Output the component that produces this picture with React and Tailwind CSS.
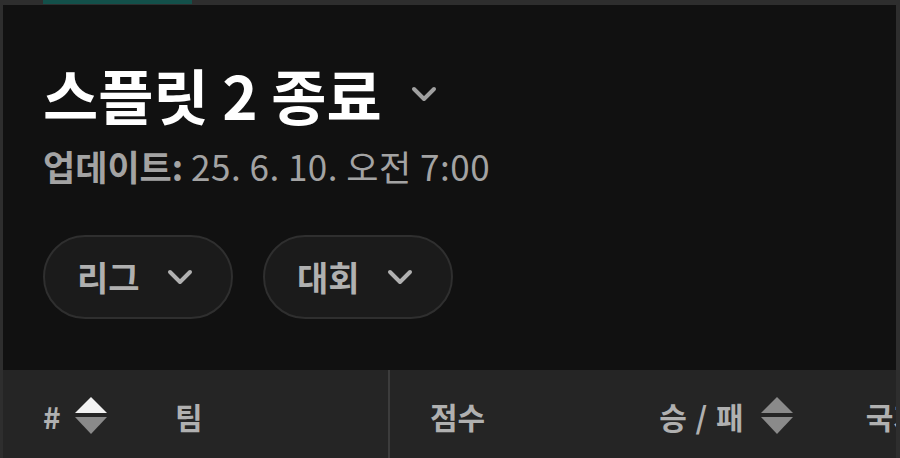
import React from 'react';

const font = { fontFamily: '"Noto Sans CJK KR", "Noto Sans", sans-serif' };

const Chevron = ({ className }) => (
  <svg viewBox="0 0 26 16" className={className} fill="none" stroke="currentColor" strokeWidth="4" strokeLinecap="round" strokeLinejoin="round">
    <path d="M3 3l10 10L23 3" />
  </svg>
);

const SortIcon = ({ active }) => (
  <svg viewBox="0 0 32 37" className="w-[32px] h-[37px]">
    <path d="M16 0L32 16H0z" fill={active ? '#f2f2f2' : '#8a8a8a'} />
    <path d="M0 20H32L16 37z" fill="#8a8a8a" />
  </svg>
);

const FilterPill = ({ label }) => (
  <button className="flex items-center h-[84px] w-[190px] rounded-full bg-[#1b1b1b] border-2 border-[#2f2f2f] pl-[32px] gap-[27px] text-[#b0b0b0]">
    <span className="text-[34px] font-bold leading-none">{label}</span>
    <Chevron className="w-[26px] h-[16px]" />
  </button>
);

export default function App() {
  return (
    <div style={font} className="w-[900px] h-[458px] bg-[#2e2e2e] overflow-hidden flex flex-col">
      {/* tab indicator strip */}
      <div className="h-[5px] shrink-0">
        <div className="ml-[43px] w-[149px] h-[4px] bg-[#13504a]" />
      </div>

      <div className="flex-1 flex flex-col ml-[3px] mr-[4px]">
        {/* Title panel */}
        <div className="h-[365px] shrink-0 bg-[#111111] pl-[40px] pt-[59px]">
          <div className="flex items-center gap-[29px]">
            <h1 className="text-[60px] font-bold text-white leading-none">스플릿 2 종료</h1>
            <Chevron className="w-[26px] h-[16px] text-[#a0a0a0]" />
          </div>
          <p className="mt-[24px] text-[35px] leading-none text-[#a3a3a3]">
            <span className="font-bold">업데이트:</span>{' '}
            <span className="tracking-[0.5px]">25. 6. 10. 오전 7:00</span>
          </p>
          <div className="mt-[52px] flex gap-[30px]">
            <FilterPill label="리그" />
            <FilterPill label="대회" />
          </div>
        </div>

        {/* Table header */}
        <div className="flex-1 bg-[#252525] flex text-[#b0b0b0] text-[30px] font-bold leading-none">
          <div className="w-[385px] flex items-center pl-[40px] pt-[3px]">
            <span className="w-[32px]">#</span>
            <SortIcon active />
            <span className="ml-[68px]">팀</span>
          </div>
          <div className="w-[2px] bg-[#3c3c3c]" />
          <div className="flex-1 flex items-center pl-[40px] pt-[3px] whitespace-nowrap overflow-hidden">
            <span>점수</span>
            <span className="ml-[174px] tracking-[1px]">승 / 패</span>
            <span className="ml-[16px]"><SortIcon /></span>
            <span className="ml-[73px]">국가</span>
          </div>
        </div>
      </div>
    </div>
  );
}
